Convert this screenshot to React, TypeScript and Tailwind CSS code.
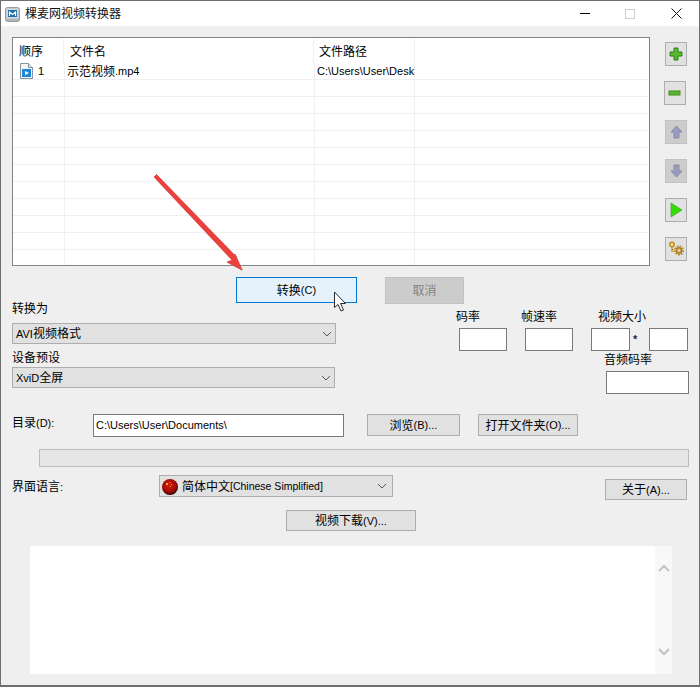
// App.tsx
import type { FC, ReactNode } from 'react';

// latin runs sit a size below the CJK glyphs, like the dialog font does
const L: FC<{ children: ReactNode; className?: string }> = ({ children, className = 'text-[11px]' }) => (
  <span className={className}>{children}</span>
);

const IconButton: FC<{ children: ReactNode; disabled?: boolean; className?: string }> = ({ children, disabled, className = '' }) => (
  <div
    className={`w-[22px] h-[24px] border flex items-center justify-center ${
      disabled ? 'bg-[#cccccc] border-[#c2c2c2]' : 'bg-[#e1e1e1] border-[#adadad]'
    } ${className}`}
  >
    {children}
  </div>
);

const Button: FC<{ children: ReactNode; className?: string }> = ({ children, className = '' }) => (
  <div className={`border border-[#adadad] bg-[#e1e1e1] flex items-center justify-center pt-px text-[12px] text-black ${className}`}>
    {children}
  </div>
);

const Field: FC<{ className?: string }> = ({ className = '' }) => (
  <div className={`h-[23px] border border-[#7a7a7a] bg-white ${className}`} />
);

const Chevron: FC = () => (
  <svg width="10" height="6" viewBox="0 0 10 6" className="shrink-0">
    <path d="M1 1l4 4 4-4" fill="none" stroke="#555" strokeWidth="1" />
  </svg>
);

const Select: FC<{ children: ReactNode; className?: string }> = ({ children, className = '' }) => (
  <div className={`h-[21px] border border-[#adadad] bg-[#e1e1e1] flex items-center justify-between pl-[3px] pr-[3px] text-[12px] ${className}`}>
    <span className="flex items-center pt-px">{children}</span>
    <Chevron />
  </div>
);

const FileIcon: FC = () => (
  <svg width="13" height="16" viewBox="0 0 13 16">
    <path d="M.5.5h8l4 4v11H.5z" fill="#f4f6f8" stroke="#8393a3" />
    <path d="M8.5.5v4h4" fill="#dfe5ea" stroke="#8393a3" />
    <rect x="2" y="6" width="9" height="8" fill="#1c86d8" />
    <path d="M5 8l4 2-4 2z" fill="#fff" />
  </svg>
);

const AppIcon: FC = () => (
  <svg width="15" height="15" viewBox="0 0 15 15">
    <rect x=".5" y=".5" width="14" height="14" rx="2" fill="#aeb6bd" stroke="#9a9a9a" />
    <rect x="1.500" y="1.500" width="12" height="10" fill="#d5dde3" />
    <rect x="3" y="3" width="9" height="7" fill="#1f6ea6" />
    <path d="M4.500 9V5l3 2.500 3-2.500v4" fill="none" stroke="#fff" strokeWidth="1.200" />
  </svg>
);

const FlagIcon: FC = () => (
  <svg width="16" height="16" viewBox="0 0 16 16" className="mr-[4px]">
    <defs>
      <radialGradient id="flag" cx="45%" cy="40%" r="60%">
        <stop offset="0%" stopColor="#d8140c" />
        <stop offset="65%" stopColor="#a80b05" />
        <stop offset="100%" stopColor="#2e0402" />
      </radialGradient>
    </defs>
    <circle cx="8" cy="8" r="8" fill="url(#flag)" />
    <circle cx="5" cy="5" r="1.200" fill="#e8b820" />
    <circle cx="8" cy="3.500" r=".6" fill="#e8b820" />
    <circle cx="9.500" cy="5.500" r=".6" fill="#e8b820" />
    <circle cx="8.500" cy="7.500" r=".6" fill="#e8b820" />
  </svg>
);

const GearsIcon: FC = () => (
  <svg width="17" height="16" viewBox="0 0 17 16">
    {/* small key-like gear */}
    <circle cx="4" cy="3.500" r="2.300" fill="#f0dc9c" stroke="#c08f1e" strokeWidth="1.400" />
    <path d="M4 6v5M4 8.500h2M4 10.500h1.500" fill="none" stroke="#c08f1e" strokeWidth="1.200" />
    {/* big gear */}
    <circle cx="11" cy="9.500" r="4.300" fill="none" stroke="#b07f14" strokeWidth="1.400" strokeDasharray="1.700 1.200" />
    <circle cx="11" cy="9.500" r="3" fill="#c9962a" stroke="#8f6510" strokeWidth=".8" />
    <circle cx="11" cy="9.500" r="1.200" fill="#e4e0d0" />
  </svg>
);

const Row: FC<{ last?: boolean; children?: ReactNode }> = ({ last, children }) => (
  <div className={`flex ${last ? 'h-[15px]' : 'h-[17px] border-b border-[#f0f0f0]'} w-[635px]`}>
    {children ?? (
      <>
        <div className="w-[52px] border-r border-[#f0f0f0]" />
        <div className="w-[250px] border-r border-[#f0f0f0]" />
        <div className="w-[100px] border-r border-[#f0f0f0]" />
      </>
    )}
  </div>
);

function App() {
  return (
    <div className="relative w-[700px] h-[687px] overflow-hidden border border-[#6e6e6e] border-b-2 bg-[#efefef] text-[12px] text-black [font-family:'Liberation_Sans','Noto_Sans_CJK_SC',sans-serif]">
      {/* title bar */}
      <div className="h-[25px] bg-white flex items-center">
        <div className="ml-[4px] w-[20px] mt-px"><AppIcon /></div>
        <span className="text-[12px] text-[#111]">棵麦网视频转换器</span>
        <div className="ml-auto flex items-center">
          <div className="w-[10px] h-px bg-black mr-[35px]" />
          <div className="w-[10px] h-[10px] border border-[#cccccc] mr-[36px]" />
          <svg width="11" height="11" viewBox="0 0 11 11" className="mr-[17px]">
            <path d="M.5.5l10 10M10.500.5l-10 10" stroke="#111" fill="none" />
          </svg>
        </div>
      </div>

      {/* file list + toolbar */}
      <div className="flex mt-[11px] ml-[11px]">
        <div className="w-[638px] h-[229px] bg-white border border-[#83838f] overflow-hidden">
          <div className="flex h-[25px] items-center">
            <div className="w-[51px] h-[24px] border-r border-[#f0f0f0] pl-[6px] pt-[2px] flex items-center">顺序</div>
            <div className="w-[250px] h-[24px] border-r border-[#f0f0f0] pl-[6px] pt-[2px] flex items-center">文件名</div>
            <div className="w-[101px] h-[24px] border-r border-[#f0f0f0] pl-[5px] pt-[2px] flex items-center">文件路径</div>
          </div>
          <Row>
            <div className="w-[52px] border-r border-[#f0f0f0] pl-[7px] flex items-center">
              <FileIcon />
              <L className="ml-[5px] pt-px text-[11px]">1</L>
            </div>
            <div className="w-[250px] border-r border-[#f0f0f0] pl-[2px] pt-px flex items-center">示范视频<L>.mp4</L></div>
            <div className="w-[100px] border-r border-[#f0f0f0] pl-[2px] pt-px flex items-center whitespace-nowrap"><L>C:\Users\User\Desk</L></div>
          </Row>
          <Row /><Row /><Row /><Row /><Row /><Row /><Row /><Row /><Row /><Row />
          <Row last />
        </div>
        <div className="ml-[15px] mt-[5px] flex flex-col gap-[15px]">
          <IconButton>
            <svg width="14" height="14" viewBox="0 0 14 14">
              <path d="M5 1h4v4h4v4H9v4H5V9H1V5h4z" fill="#56b92e" stroke="#2f7d1c" />
            </svg>
          </IconButton>
          <IconButton className="-ml-px">
            <svg width="14" height="6" viewBox="0 0 14 6">
              <rect x="1" y="1" width="11" height="4" fill="#56b92e" stroke="#4a8a1e" />
            </svg>
          </IconButton>
          <IconButton disabled>
            <svg width="13" height="14" viewBox="0 0 13 14">
              <path d="M6.500 1l5.500 6H9v6H4V7H1z" fill="#9a9ac6" stroke="#8c8c9c" />
            </svg>
          </IconButton>
          <IconButton disabled>
            <svg width="13" height="14" viewBox="0 0 13 14">
              <path d="M6.500 13L1 7h3V1h5v6h3z" fill="#9a9ac6" stroke="#8c8c9c" />
            </svg>
          </IconButton>
          <IconButton>
            <svg width="13" height="16" viewBox="0 0 13 16">
              <path d="M1 1l11 7-11 7z" fill="#33dd00" stroke="#45a82a" strokeWidth=".7" />
            </svg>
          </IconButton>
          <IconButton>
            <GearsIcon />
          </IconButton>
        </div>
      </div>

      {/* convert / cancel */}
      <div className="flex items-start mt-[11px] ml-[235px] h-[27px]">
        <div className="w-[121px] h-[26px] border border-[#0078d7] bg-[#e5f1fb] flex items-center justify-center pt-px">转换<L>(C)</L></div>
        <div className="ml-[28px] w-[79px] h-[27px] border border-[#c2c2c2] bg-[#cccccc] text-[#838383] flex items-center justify-center pt-px">取消</div>
      </div>

      {/* format + numbers */}
      <div className="flex -mt-[4px] ml-[11px]">
        <div className="w-[324px]">
          <div className="h-[16px] leading-[16px] pt-px">转换为</div>
          <Select className="mt-[7px] w-[324px]"><L>AVI</L>视频格式</Select>
          <div className="h-[16px] leading-[16px] mt-[5px] pt-px">设备预设</div>
          <Select className="mt-[2px] w-[323px]"><L>XviD</L>全屏</Select>
        </div>
        <div className="ml-[120px] mt-[8px]">
          <div className="flex">
            <div className="w-[65px]">
              <div className="h-[16px] leading-[16px] pt-px">码率</div>
              <Field className="mt-[4px] ml-[3px] w-[48px]" />
            </div>
            <div className="w-[70px]">
              <div className="h-[16px] leading-[16px] pt-px">帧速率</div>
              <Field className="mt-[4px] ml-[4px] w-[48px]" />
            </div>
            <div>
              <div className="h-[16px] leading-[16px] ml-[7px] pt-px">视频大小</div>
              <div className="flex mt-[4px] items-center">
                <Field className="w-[39px]" />
                <span className="w-[19px] pl-[3px] pb-px font-bold text-[11px] text-[#224]">*</span>
                <Field className="w-[39px]" />
              </div>
            </div>
          </div>
          <div className="ml-[148px] h-[16px] leading-[16px] mt-px">音频码率</div>
          <Field className="ml-[150px] mt-[3px] w-[83px]" />
        </div>
      </div>

      {/* output directory */}
      <div className="flex items-start mt-[20px] ml-[11px]">
        <div className="w-[81px] h-[16px] leading-[16px] mt-px">目录<L>(D):</L></div>
        <div className="w-[251px] h-[23px] border border-[#7a7a7a] bg-white flex items-center pl-[2px] pb-px"><L>C:\Users\User\Documents\</L></div>
        <Button className="ml-[23px] w-[93px] h-[22px]">浏览<L>(B)...</L></Button>
        <Button className="ml-[18px] w-[100px] h-[22px]">打开文件夹<L>(O)...</L></Button>
      </div>

      {/* progress */}
      <div className="mt-[12px] ml-[38px] w-[650px] h-[18px] bg-[#e6e6e6] border border-[#bcbcbc]" />

      {/* language */}
      <div className="flex items-start mt-[8px] ml-[11px] h-[25px]">
        <div className="w-[147px] h-[16px] leading-[16px] mt-[4px]">界面语言<L>:</L></div>
        <Select className="!h-[22px] w-[234px] !pl-[2px] !pr-[5px]"><FlagIcon />简体中文<L className="text-[10.5px]">[Chinese Simplified]</L></Select>
        <Button className="ml-[212px] mt-[4px] w-[82px] h-[21px]">关于<L>(A)...</L></Button>
      </div>

      {/* download */}
      <Button className="mt-[10px] ml-[285px] w-[130px] h-[21px]">视频下载<L>(V)...</L></Button>

      {/* log panel */}
      <div className="mt-[15px] ml-[29px] w-[642px] h-[128px] bg-white flex justify-end">
        <div className="w-[17px] h-full bg-[#f8f8f8] flex flex-col items-center justify-between py-[18px]">
          <svg width="12" height="8" viewBox="0 0 12 8">
            <path d="M1 7l5-5 5 5" fill="none" stroke="#c4c4c4" strokeWidth="2.200" />
          </svg>
          <svg width="12" height="8" viewBox="0 0 12 8">
            <path d="M1 1l5 5 5-5" fill="none" stroke="#c4c4c4" strokeWidth="2.200" />
          </svg>
        </div>
      </div>

      {/* annotation arrow and mouse pointer over the window */}
      <svg width="700" height="687" viewBox="0 0 700 687" className="absolute -left-px -top-px pointer-events-none">
        <path d="M154 177l2.500-2.500 78 80.500 .5-1 7 16-15-8 5-2z" fill="#6b6b6b" opacity=".45" transform="translate(1 1)" />
        <path d="M154 177l2.500-2.500 78 80.500 .5-1 7 16-15-8 5-2z" fill="#e8413e" stroke="#e8413e" strokeWidth=".8" />
        <path d="M334.500 292v15.500l3.500-3 3 6.500 2.500-1-3-6.500h5z" fill="#fff" stroke="#2b2b2b" />
      </svg>
    </div>
  );
}

export default App;
